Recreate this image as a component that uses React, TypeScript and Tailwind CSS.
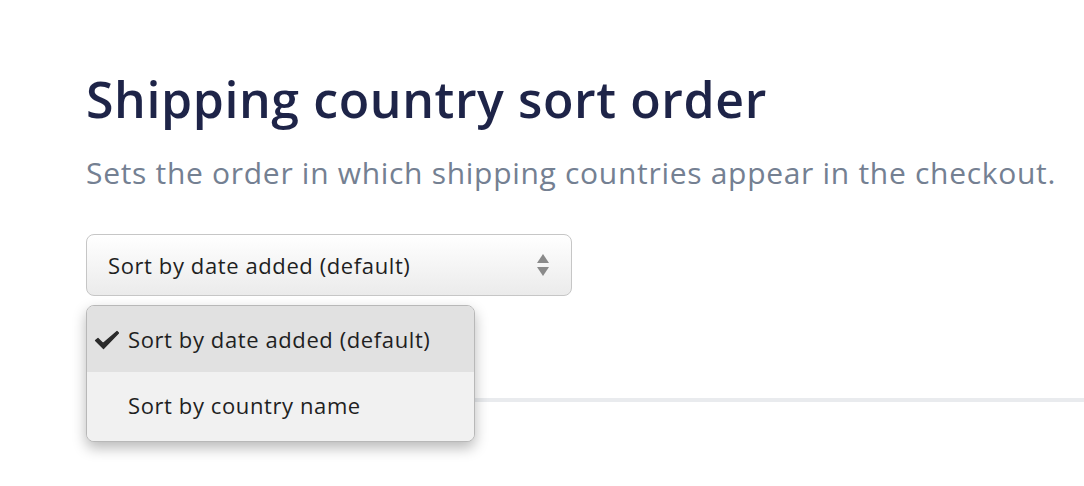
import React from "react";

const options = ["Sort by date added (default)", "Sort by country name"];

const App = () => {
  const selected = 0;
  return (
    <div
      className="w-[1084px] h-[486px] overflow-hidden bg-white relative"
      style={{ fontFamily: "'Open Sans', Lato, sans-serif" }}
    >
      <div className="pl-[86px] pt-[68px]">
        <h1 className="text-[50px] leading-[62px] font-semibold text-[#1e2448] tracking-[0.6px]">
          Shipping country sort order
        </h1>
        <p className="mt-[25px] text-[30px] leading-[36px] text-[#748092] tracking-[0.7px]">
          Sets the order in which shipping countries appear in the checkout.
        </p>
        <div className="relative mt-[43px] w-[486px]">
          <div className="h-[62px] rounded-[8px] border border-[#c6c6c6] bg-gradient-to-b from-white to-[#ebebeb] flex items-center justify-between pl-[21px] pr-[21px]">
            <span className="text-[22px] text-[#1f1f1f] tracking-[0.6px]">{options[selected]}</span>
            <svg width="14" height="24" viewBox="0 0 14 24">
              <path d="M7 1 L13 10 L1 10 Z" fill="#8a8a8a" />
              <path d="M1 14 L13 14 L7 23 Z" fill="#8a8a8a" />
            </svg>
          </div>
          <ul className="absolute left-0 top-[71px] w-[389px] rounded-[8px] border border-[#b8b8b8] bg-[#f1f1f1] overflow-hidden shadow-[0_6px_14px_rgba(0,0,0,0.28)] z-10">
            {options.map((opt, index) => (
              <li
                key={index}
                className={`relative flex items-center pl-[41px] text-[22px] text-[#1f1f1f] tracking-[0.6px] ${
                  index === selected ? "h-[66px] bg-[#e1e1e1]" : "h-[69px] pb-[2px] bg-[#f1f1f1]"
                }`}
              >
                {index === selected && (
                  <svg
                    className="absolute left-[7px] top-[24px]"
                    width="26"
                    height="20"
                    viewBox="0 0 26 20"
                  >
                    <path
                      d="M1.5 10.5 L4 8.5 L9 13.5 L23 1.5 L24.5 3 L9.5 18.5 Z"
                      fill="#2a2a2a"
                      stroke="#2a2a2a"
                      strokeWidth="1.2"
                      strokeLinejoin="round"
                    />
                  </svg>
                )}
                {opt}
              </li>
            ))}
          </ul>
        </div>
      </div>
      <div className="mt-[102px] ml-[86px] h-[4px] bg-[#e9ebee]" />
    </div>
  );
};

export default App;
